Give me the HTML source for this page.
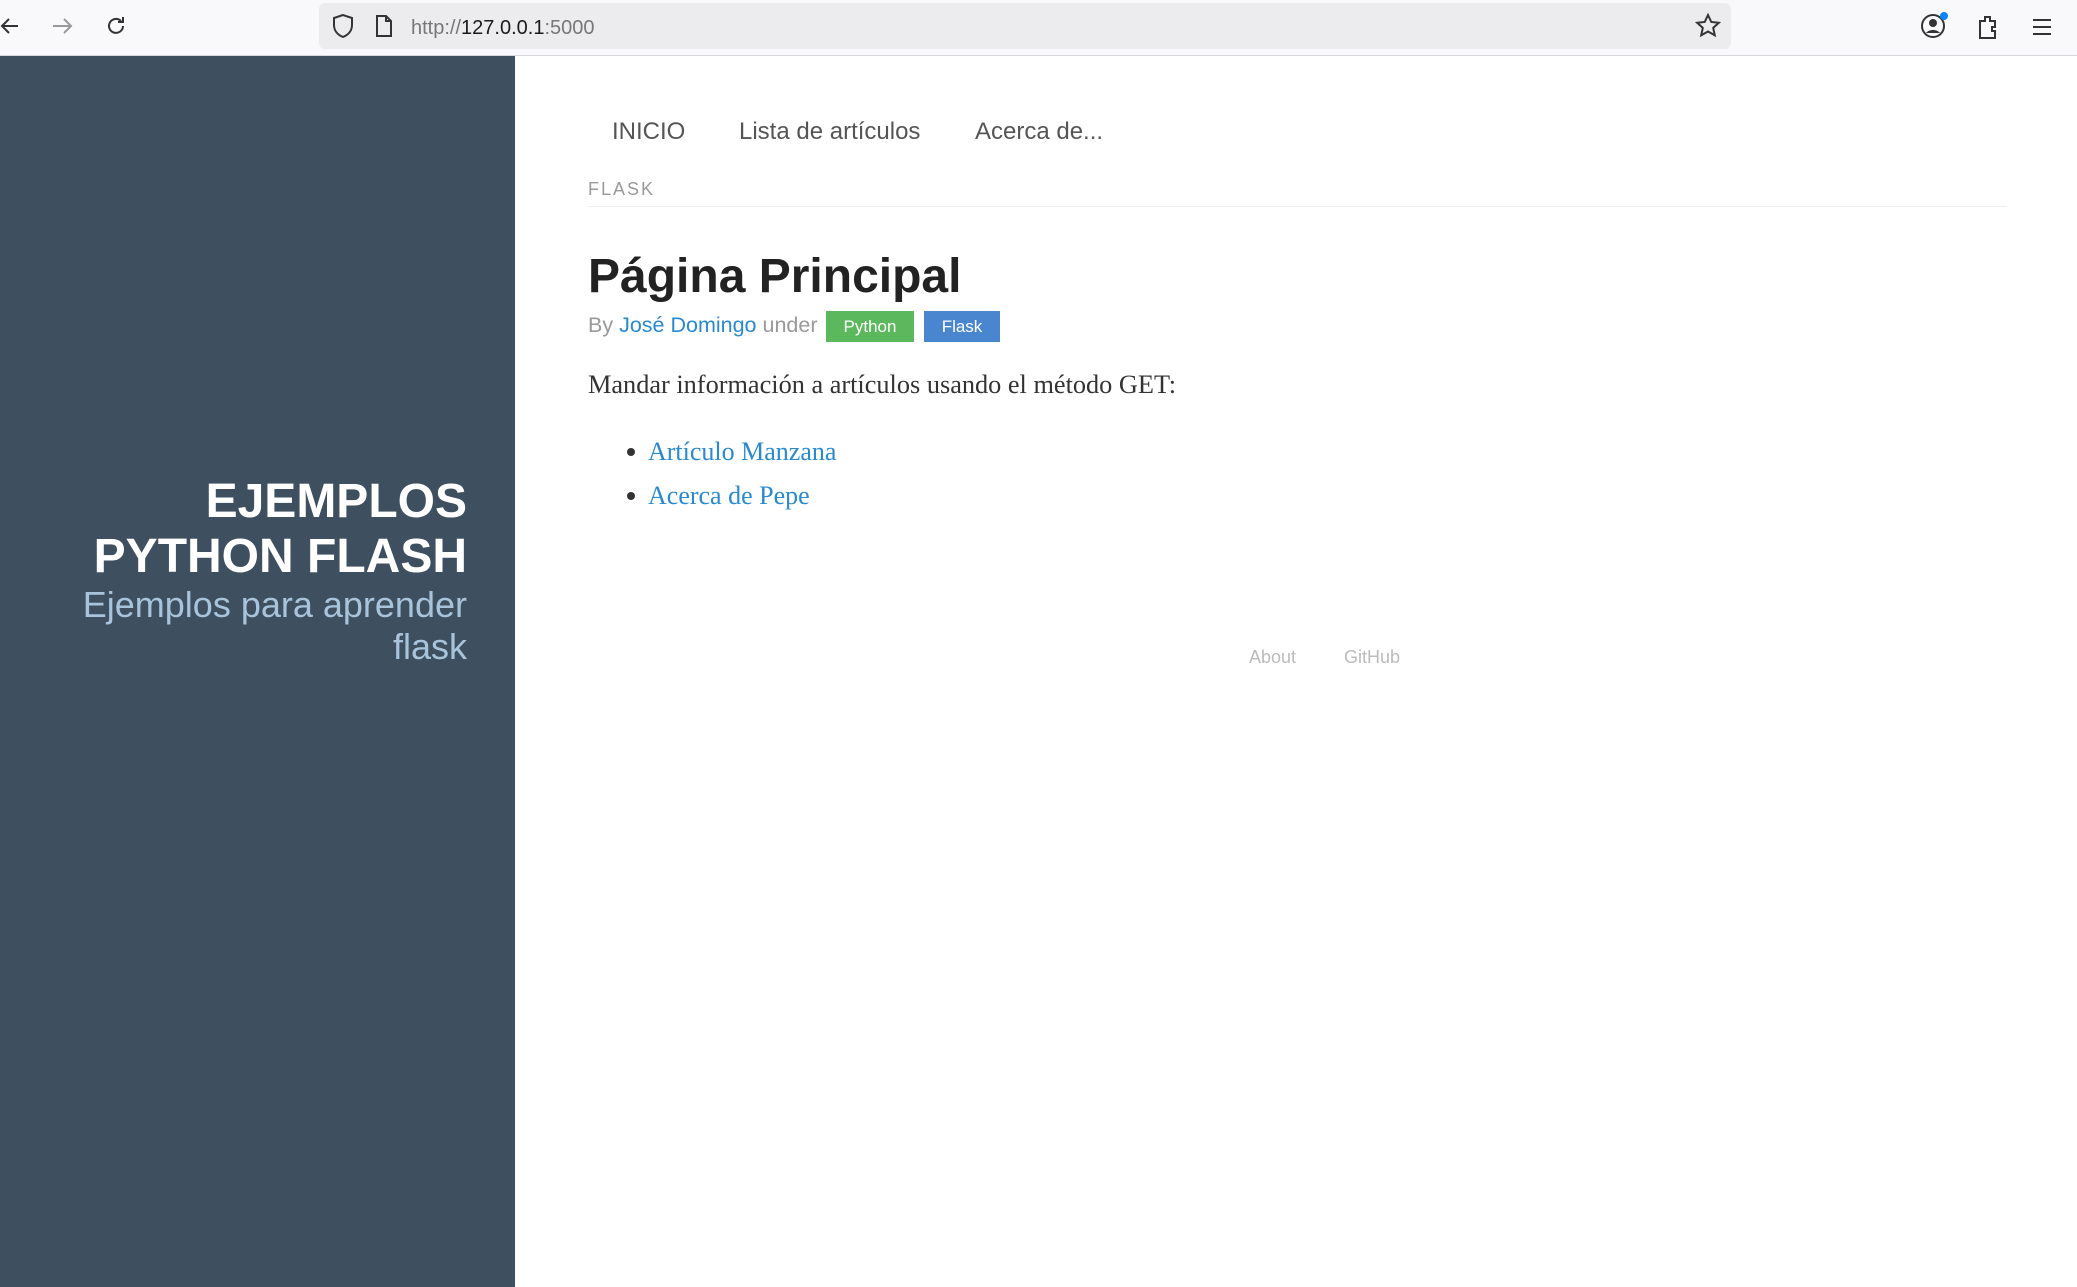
<!DOCTYPE html>
<html><head><meta charset="utf-8"><style>
*{margin:0;padding:0;box-sizing:border-box}
body{width:2077px;height:1287px;overflow:hidden;background:#fff;font-family:"Liberation Sans",Arial,sans-serif;position:relative}
.tb{position:absolute;left:0;top:0;width:2077px;height:56px;background:#f9f9fb;border-bottom:1px solid #d8d8dc}
.url{position:absolute;left:319px;top:3px;width:1412px;height:46px;background:#ececee;border-radius:6px}
.url span{position:absolute;left:92px;top:14px;font-size:20px;color:#777}
.url b{font-weight:normal;color:#1b1b1b}
svg{position:absolute}
.side{position:absolute;left:0;top:56px;width:515px;height:1231px;background:#3e5060}
.t1{position:absolute;right:1610px;top:474px;text-align:right;color:#fff;font-weight:bold;font-size:48px;line-height:55px;white-space:nowrap}
.t2{position:absolute;right:1610px;top:584px;text-align:right;color:#a9c4da;font-size:36px;line-height:42px;white-space:nowrap}
.nav{position:absolute;top:118px;font-size:24px;color:#555}
.flask{position:absolute;left:588px;top:179px;font-size:18px;letter-spacing:2px;color:#999}
.hr{position:absolute;left:588px;top:206px;width:1419px;height:1px;background:#eee}
h1{position:absolute;left:588px;top:249px;font-size:48px;color:#222;font-weight:bold}
.by{position:absolute;left:588px;top:313px;font-size:21.5px;color:#999;white-space:nowrap}
.by a{color:#2a8ad0;text-decoration:none}
.badge{position:absolute;top:311px;height:31px;color:#fff;font-size:17px;line-height:31px;text-align:center}
p{position:absolute;left:588px;top:370px;font-family:"Liberation Serif",Georgia,serif;font-size:26.3px;color:#333;white-space:nowrap}
.li{position:absolute;left:648px;font-family:"Liberation Serif",Georgia,serif;font-size:26px;color:#2a8ad0;white-space:nowrap}
.dot{position:absolute;left:627px;width:8px;height:8px;border-radius:50%;background:#333}
.ft{position:absolute;top:647px;font-size:18px;color:#bbb}
</style></head><body>
<div class="tb">
<svg width="24" height="24" style="left:0;top:14px" viewBox="0 0 24 24"><path d="M18 12H2M9 5l-7 7 7 7" stroke="#333" stroke-width="2" fill="none"/></svg>
<svg width="24" height="24" style="left:50px;top:14px" viewBox="0 0 24 24"><path d="M3 12h17M14 5l7 7-7 7" stroke="#999" stroke-width="2" fill="none"/></svg>
<svg width="24" height="24" style="left:104px;top:14px" viewBox="0 0 24 24"><path d="M19 12a7 7 0 1 1-2-5M19 3v5h-5" stroke="#333" stroke-width="2" fill="none"/></svg>
<div class="url">
<svg width="24" height="26" style="left:12px;top:10px" viewBox="0 0 24 26"><path d="M12 2L3 5v7c0 6 4 10 9 12 5-2 9-6 9-12V5z" stroke="#333" stroke-width="2" fill="none"/></svg>
<svg width="20" height="24" style="left:55px;top:11px" viewBox="0 0 20 24"><path d="M3 2h9l5 5v15H3z M12 2v5h5" stroke="#333" stroke-width="2" fill="none"/></svg>
<span>http://<b>127.0.0.1</b>:5000</span>
<svg width="26" height="26" style="left:1376px;top:10px" viewBox="0 0 26 26"><path d="M13 2l3.3 7 7.5.8-5.6 5.1 1.6 7.4L13 18.5l-6.8 3.8 1.6-7.4L2.2 9.8 9.7 9z" stroke="#333" stroke-width="2" fill="none"/></svg>
</div>
<svg width="30" height="30" style="left:1919px;top:11px" viewBox="0 0 30 30"><circle cx="14" cy="15" r="11" stroke="#333" stroke-width="2" fill="none"/><circle cx="14" cy="12" r="4" fill="#333"/><path d="M7 22c3-4 11-4 14 0" fill="#333"/><circle cx="25" cy="5" r="4" fill="#0a84ff"/></svg>
<svg width="26" height="28" style="left:1976px;top:13px" viewBox="0 0 26 28"><path d="M4 8h5V4h5v4h5v6h-3v4h3v7H4z" stroke="#333" stroke-width="2" fill="none"/></svg>
<svg width="22" height="22" style="left:2031px;top:16px" viewBox="0 0 22 22"><path d="M2 4h18M2 11h18M2 18h18" stroke="#333" stroke-width="2"/></svg>
</div>
<div class="side"></div>
<div class="t1">EJEMPLOS<br>PYTHON FLASH</div>
<div class="t2">Ejemplos para aprender<br>flask</div>
<div class="nav" style="left:612px">INICIO</div>
<div class="nav" style="left:739px">Lista de artículos</div>
<div class="nav" style="left:975px">Acerca de...</div>
<div class="flask">FLASK</div>
<div class="hr"></div>
<h1>Página Principal</h1>
<div class="by">By <a>José Domingo</a> under</div>
<div class="badge" style="left:826px;width:88px;background:#5cb85c">Python</div>
<div class="badge" style="left:924px;width:76px;background:#4a86cf">Flask</div>
<p>Mandar información a artículos usando el método GET:</p>
<div class="dot" style="top:448px"></div><div class="li" style="top:437px">Artículo Manzana</div>
<div class="dot" style="top:492px"></div><div class="li" style="top:481px">Acerca de Pepe</div>
<div class="ft" style="left:1249px">About</div>
<div class="ft" style="left:1344px">GitHub</div>
</body></html>
